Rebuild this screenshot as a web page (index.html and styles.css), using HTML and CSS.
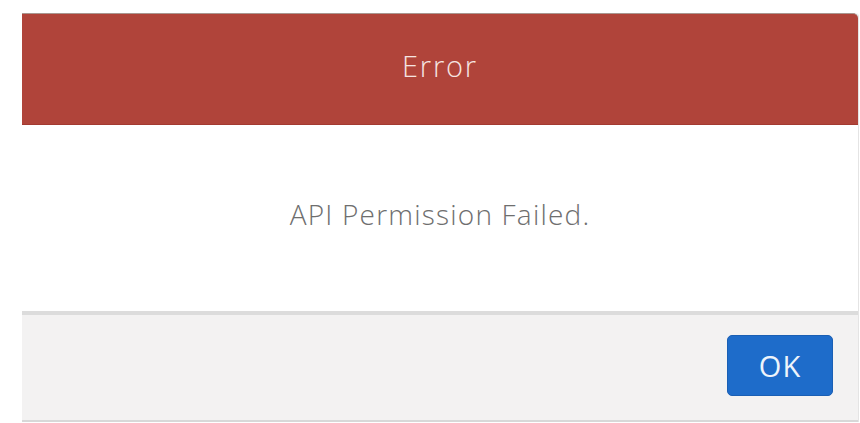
FILE: index.html
```html
<!DOCTYPE html>
<html>
<head>
<meta charset="utf-8">
<link rel="stylesheet" href="styles.css">
</head>
<body>
<div class="modal">
  <div class="modal-header"><h2 class="title">Error</h2></div>
  <div class="modal-body"><p class="message">API Permission Failed.</p></div>
  <div class="modal-footer"><button class="btn">OK</button></div>
</div>
</body>
</html>
```
FILE: styles.css
```css
html, body { margin: 0; padding: 0; background: #ffffff; }
body { padding: 13px 2px 0 22px; font-family: "Open Sans", "Liberation Sans", sans-serif; }
.modal {
  width: 836px;
  display: flex;
  flex-direction: column;
  border-right: 1px solid #e4e4e4;
  border-radius: 0 4px 0 0;
}
.modal-header {
  height: 110px;
  background: #b0443a;
  border-top: 1px solid #a9968f;
  border-bottom: 1px solid #a33a31;
  border-radius: 0 5px 0 0;
  display: flex;
  align-items: center;
  justify-content: center;
}
.title {
  margin: 0;
  font-weight: 300;
  font-size: 29px;
  letter-spacing: 1.8px;
  color: #f6e4e1;
  padding-bottom: 8px;
}
.modal-body {
  height: 186px;
  background: #fff;
  display: flex;
  align-items: center;
  justify-content: center;
}
.message {
  margin: 0;
  font-size: 28px;
  font-weight: 300;
  letter-spacing: 1.2px;
  color: #6e6e6e;
  padding-bottom: 8px;
}
.modal-footer {
  height: 105px;
  background: #f3f2f2;
  border-top: 4px solid #dcdcdc;
  border-bottom: 2px solid #d8d8d8;
  display: flex;
  align-items: center;
  justify-content: flex-end;
  padding-right: 25px;
}
.btn {
  width: 106px;
  height: 61px;
  margin-bottom: 4px;
  background: #1e6cca;
  border: 1px solid #1a5fb4;
  border-radius: 5px;
  color: #eef4fb;
  font-family: "Open Sans", "Liberation Sans", sans-serif;
  font-size: 29px;
  letter-spacing: 1px;
  padding: 0;
}
```
